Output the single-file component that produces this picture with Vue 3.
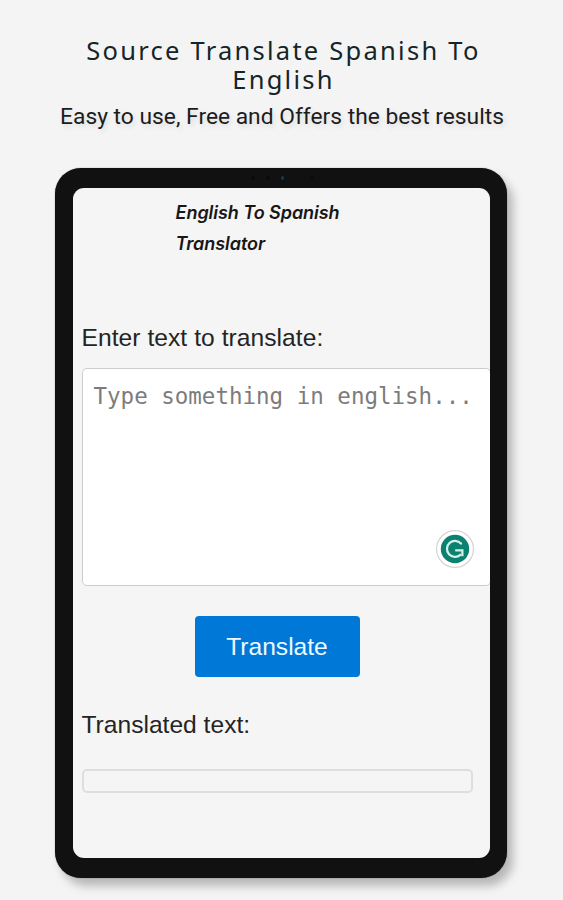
<script setup>
const title = ['Source Translate Spanish To', 'English']
</script>

<template>
  <main class="promo">
    <header class="intro">
      <h1><span v-for="line in title" :key="line">{{ line }}</span></h1>
      <p>Easy to use, Free and Offers the best results</p>
    </header>
    <section class="tablet">
      <div class="camera"><i></i><i></i><i class="lens"></i><i class="far"></i></div>
      <div class="screen">
        <h2><span>English To Spanish</span><span>Translator</span></h2>
        <label class="prompt">Enter text to translate:</label>
        <div class="entry">
          <span class="placeholder">Type something in english...</span>
          <span class="badge">
            <svg viewBox="0 0 38 38" width="38" height="38">
              <circle cx="19" cy="19" r="18.4" fill="#fff" stroke="#d4d4d4" stroke-width="1.2" />
              <circle cx="19" cy="19" r="14.2" fill="#0b8170" />
              <path d="M25 13.6A8 8 0 1 0 24.4 24.8" fill="none" stroke="#d5efe9" stroke-width="2.3" stroke-linecap="round" />
              <path d="M19.2 20.3H26.4V26.2" fill="none" stroke="#d5efe9" stroke-width="2.2" />
            </svg>
          </span>
        </div>
        <button type="button">Translate</button>
        <div class="result-label">Translated text:</div>
        <div class="result"></div>
      </div>
    </section>
  </main>
</template>

<style>
body { background: #f4f4f4; }
</style>

<style scoped>
* { box-sizing: border-box; }
.promo {
  width: 563px;
  height: 900px;
  overflow: hidden;
  background: #f4f4f4;
  padding-top: 36px;
  display: flex;
  flex-direction: column;
  align-items: center;
}
.intro { height: 132px; text-align: center; white-space: nowrap; }
h1 {
  margin: 0;
  padding-left: 4px;
  color: #142527;
  font: 400 25.5px/29px "Noto Sans", sans-serif;
  letter-spacing: 2.25px;
}
h1 span { display: block; }
.intro p {
  margin: 9px 0 0;
  padding-left: 1px;
  color: #1c1c1c;
  font: 400 22.8px/28px Roboto, sans-serif;
  text-shadow: 2px 3px 5px rgba(0, 0, 0, 0.1);
}
.tablet {
  width: 452px;
  height: 710px;
  flex: none;
  margin-right: 2px;
  padding: 0 17px 20px 18px;
  border-radius: 26px;
  background: #111;
  box-shadow: 0 0 1px #555, 6px 8px 10px rgba(0, 0, 0, 0.25);
}
.camera {
  height: 20px;
  padding-left: 178px;
  display: flex;
  align-items: center;
  gap: 11px;
}
.camera i { width: 4px; height: 4px; border-radius: 50%; background: #0a0b0c; }
.camera .lens { width: 3px; height: 4px; background: #153a58; }
.camera .far { margin-left: 15px; }
.screen {
  height: 670px;
  overflow: hidden;
  border-radius: 11px;
  background: #f5f5f5;
  padding: 9px 0 0 9px;
  display: flex;
  flex-direction: column;
  align-items: flex-start;
}
h2 {
  margin: 0 0 0 94px;
  height: 126px;
  color: #171717;
  font: italic 600 18px/31px Inter, sans-serif;
  letter-spacing: -0.05px;
}
h2 span { display: block; }
.prompt, .result-label {
  color: #242424;
  font: 24.6px/30px "Liberation Sans", sans-serif;
}
.prompt { letter-spacing: 0.05px; }
.entry {
  position: relative;
  flex: none;
  width: 409px;
  height: 218px;
  margin-top: 15px;
  padding: 13px 11px;
  border: 1px solid #ccc;
  border-radius: 5px;
  background: #fff;
}
.placeholder {
  display: block;
  color: #7c7c7c;
  font: 22.5px/28px "DejaVu Sans Mono", monospace;
  white-space: nowrap;
}
.badge { position: absolute; right: 16px; bottom: 17px; width: 38px; height: 38px; }
.badge svg { display: block; }
button {
  width: 165px;
  height: 61px;
  flex: none;
  margin: 30px 0 0 113px;
  padding: 0;
  border: 0;
  border-radius: 4px;
  background: #0078d7;
  color: #eef8ff;
  font: 24.6px/61px "Liberation Sans", sans-serif;
}
.result-label { margin-top: 33px; }
.result {
  width: 391px;
  height: 24px;
  margin-top: 29px;
  border: 2px solid #dedede;
  border-radius: 5px;
}
</style>
